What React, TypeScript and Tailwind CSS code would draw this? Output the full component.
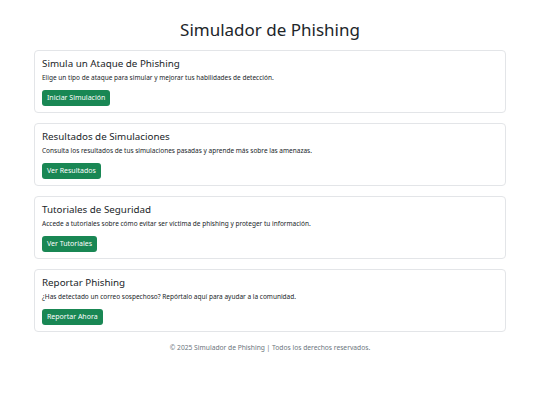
const cards = [
  {
    title: 'Simula un Ataque de Phishing',
    text: 'Elige un tipo de ataque para simular y mejorar tus habilidades de detección.',
    action: 'Iniciar Simulación',
  },
  {
    title: 'Resultados de Simulaciones',
    text: 'Consulta los resultados de tus simulaciones pasadas y aprende más sobre las amenazas.',
    action: 'Ver Resultados',
  },
  {
    title: 'Tutoriales de Seguridad',
    text: 'Accede a tutoriales sobre cómo evitar ser víctima de phishing y proteger tu información.',
    action: 'Ver Tutoriales',
  },
  {
    title: 'Reportar Phishing',
    text: '¿Has detectado un correo sospechoso? Repórtalo aquí para ayudar a la comunidad.',
    action: 'Reportar Ahora',
  },
]

export default function App() {
  return (
    <div className="min-h-[405px] bg-white font-['Noto_Sans',sans-serif] text-[#212529]">
      <div className="mx-auto w-[472px] pt-[20px]">
        <h1 className="mb-[10px] text-center text-[17px] leading-[20px] font-normal">
          Simulador de Phishing
        </h1>

        <div className="flex flex-col gap-[10px]">
          {cards.map(card => (
            <div
              key={card.title}
              className="flex flex-col items-start rounded-[4px] border border-[#e3e5e8] bg-white px-[7px] pt-[7px] pb-[6px]"
            >
              <h4 className="text-[9.8px] leading-[12px] font-normal">{card.title}</h4>
              <p className="mt-[3px] text-[6.5px] leading-[10px]">{card.text}</p>
              <button className="mt-[7px] h-[16px] rounded-[3px] bg-[#198754] px-[5px] text-[7px] leading-[16px] text-white">
                {card.action}
              </button>
            </div>
          ))}
        </div>

        <footer className="mt-[11px] text-center text-[6.7px] leading-[10px] text-[#6c757d]">
          © 2025 Simulador de Phishing | Todos los derechos reservados.
        </footer>
      </div>
    </div>
  )
}
